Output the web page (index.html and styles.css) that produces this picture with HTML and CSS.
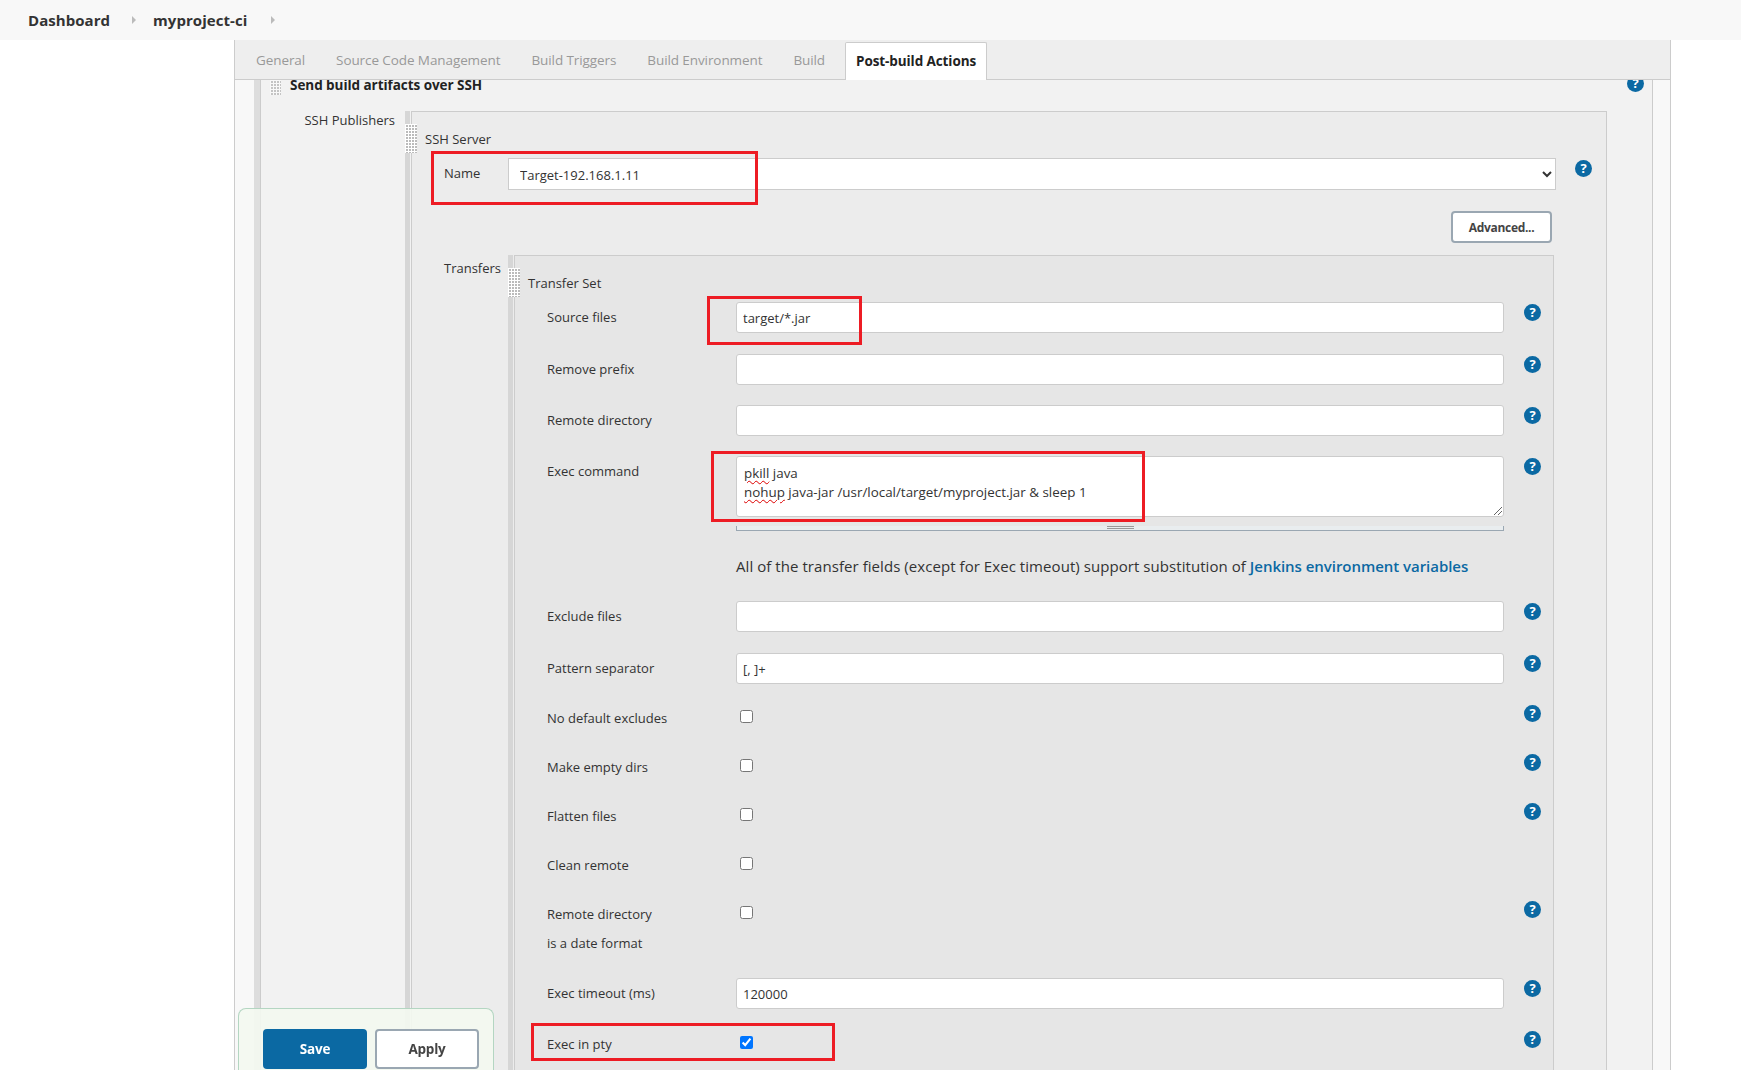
FILE: index.html
```html
<!DOCTYPE html>
<html lang="en">
<head>
<meta charset="utf-8">
<title>myproject-ci Config</title>
<link rel="stylesheet" href="styles.css">
</head>
<body>
<header class="topbar">
  <a class="crumb">Dashboard</a><span class="caret"></span>
  <a class="crumb">myproject-ci</a><span class="caret caret-end"></span>
</header>
<main class="main">
  <nav class="tabs">
    <span class="tab">General</span>
    <span class="tab">Source Code Management</span>
    <span class="tab">Build Triggers</span>
    <span class="tab">Build Environment</span>
    <span class="tab">Build</span>
    <span class="tab tab-active">Post-build Actions</span>
  </nav>
  <div class="content">
    <section class="section">
      <div class="section-head">
        <span class="grip-head"></span>
        <strong class="section-title">Send build artifacts over SSH</strong>
        <span class="help help-head">?</span>
      </div>
      <div class="nest nest-publishers">
        <div class="nest-label nest-label-pub">SSH Publishers</div>
        <div class="repeat repeat-server">
          <span class="bar"></span><span class="handle"></span>
          <div class="box box-server">
            <div class="box-title">SSH Server</div>
            <div class="name-row">
              <label class="name-label">Name</label>
              <select class="select"><option>Target-192.168.1.11</option></select>
              <span class="help help-name">?</span>
            </div>
            <div class="adv-row"><button class="btn-adv">Advanced...</button></div>
            <div class="nest nest-transfers">
              <div class="nest-label nest-label-tr">Transfers</div>
              <div class="repeat repeat-set">
                <span class="bar"></span><span class="handle"></span>
                <div class="box box-set">
                  <div class="box-title">Transfer Set</div>
                  <div class="rows">
                    <div class="row row-a"><label class="lbl">Source files</label><input class="input" value="target/*.jar"><span class="help">?</span></div>
                    <div class="row"><label class="lbl">Remove prefix</label><input class="input"><span class="help">?</span></div>
                    <div class="row"><label class="lbl">Remote directory</label><input class="input"><span class="help">?</span></div>
                    <div class="row row-text">
                      <label class="lbl">Exec command</label>
                      <div class="field-text">
                        <div class="textarea">
                          <span class="typo">pkill</span> java<br>
                          <span class="typo">nohup</span> java-jar /usr/local/target/myproject.jar &amp; sleep 1
                          <svg class="resize" width="12" height="12" viewBox="0 0 12 12"><path d="M11 3 3 11M11 7 7 11" stroke="#666" stroke-width="1" fill="none"/></svg>
                        </div>
                        <div class="drag"><span class="drag-mark"></span></div>
                      </div>
                      <span class="help">?</span>
                    </div>
                    <p class="note">All of the transfer fields (except for Exec timeout) support substitution of <a class="link">Jenkins environment variables</a></p>
                    <div class="row row-a"><label class="lbl">Exclude files</label><input class="input"><span class="help">?</span></div>
                    <div class="row"><label class="lbl">Pattern separator</label><input class="input" value="[, ]+"><span class="help">?</span></div>
                    <div class="row row-check"><label class="lbl">No default excludes</label><div class="cell"><input type="checkbox" class="check"></div><span class="help">?</span></div>
                    <div class="row row-check"><label class="lbl">Make empty dirs</label><div class="cell"><input type="checkbox" class="check"></div><span class="help">?</span></div>
                    <div class="row row-check"><label class="lbl">Flatten files</label><div class="cell"><input type="checkbox" class="check"></div><span class="help">?</span></div>
                    <div class="row row-check"><label class="lbl">Clean remote</label><div class="cell"><input type="checkbox" class="check"></div></div>
                    <div class="row row-check row-tall"><label class="lbl">Remote directory<br>is a date format</label><div class="cell"><input type="checkbox" class="check"></div><span class="help">?</span></div>
                    <div class="row row-a"><label class="lbl">Exec timeout (ms)</label><input class="input" value="120000"><span class="help">?</span></div>
                    <div class="row row-check"><label class="lbl">Exec in pty</label><div class="cell"><input type="checkbox" class="check" checked></div><span class="help">?</span></div>
                  </div>
                </div>
              </div>
            </div>
          </div>
        </div>
      </div>
    </section>
  </div>
</main>
<div class="savebar">
  <button class="btn-save">Save</button>
  <button class="btn-apply">Apply</button>
</div>
<span class="mark mark-name"></span>
<span class="mark mark-source"></span>
<span class="mark mark-exec"></span>
<span class="mark mark-pty"></span>
</body>
</html>
```

FILE: styles.css
```css
* { box-sizing: border-box; }
html, body { margin: 0; height: 1070px; overflow: hidden; background: #fff; }
body { font: 13px/20px "Open Sans", "Noto Sans", sans-serif; color: #333; }

.topbar { height: 40px; background: #f8f8f8; display: flex; align-items: center; padding-left: 28px; }
.crumb { font-weight: 700; font-size: 15px; color: #333; letter-spacing: 0.05px; }
.caret { width: 0; height: 0; border-left: 4px solid #bbb; border-top: 4px solid transparent; border-bottom: 4px solid transparent; margin: 0 17px 0 22px; }
.caret-end { margin-left: 24px; }

.main { margin-left: 234px; width: 1437px; height: 1030px; border-left: 1px solid #ccc; border-right: 1px solid #ccc; display: flex; flex-direction: column; }
.tabs { height: 40px; flex: none; background: #eee; border-bottom: 1px solid #ccc; display: flex; align-items: flex-end; gap: 9px; padding-left: 10px; position: relative; z-index: 1; font-size: 13.5px; letter-spacing: -0.09px; }
.tab { height: 37px; line-height: 36px; padding: 0 11px; color: #999; white-space: nowrap; }
.tab-active { background: #fff; color: #222; font-weight: 700; border: 1px solid #ccc; border-bottom: 0; border-radius: 2px 2px 0 0; height: 38px; margin-bottom: -1px; padding: 0 10px; }

.content { flex: 1; min-height: 0; background: #f8f8f8; padding: 0 17px 0 19px; }
.section { height: 100%; background: #f2f2f2; border-left: 6px solid #ddd; border-right: 1px solid #ccc; position: relative; }
.section::before { content: ""; position: absolute; left: 0; top: 0; bottom: 0; width: 1px; background: #ccc; }

.section-head { height: 31px; display: flex; align-items: flex-start; padding: 0 8px 0 10px; }
.grip-head { width: 11px; height: 15px; flex: none; margin-right: 9px; background: linear-gradient(90deg, #f8f8f8 1px, transparent 1px) 0 0 / 3px 3px, linear-gradient(#f8f8f8 1px, #c4c4c4 1px) 0 0 / 3px 3px; }
.section-title { line-height: 10px; color: #222; font-weight: 700; font-size: 13.5px; letter-spacing: -0.05px; }

.help { width: 17px; height: 17px; flex: none; border-radius: 50%; background: #0b69a3; color: #fff; font: 700 13px/17px "Open Sans", sans-serif; text-align: center; margin-top: 1.5px; }
.help-head { margin-left: auto; margin-top: -5px; }
.help-name { margin: 2px 0 0 19px; }

.nest { display: flex; align-items: flex-start; }
.nest-label { text-align: right; white-space: nowrap; }
.nest-label-pub { width: 135px; margin-top: -1px; margin-right: 10px; }
.nest-label-tr { width: 55px; margin: 3px 9px 0 0; text-align: left; }
.nest-publishers { padding-right: 45px; }
.nest-transfers { padding-left: 19px; padding-right: 52px; margin-top: 12px; }

.repeat { flex: 1; min-width: 0; display: flex; position: relative; }
.bar { width: 5px; flex: none; background: #d6d6d6; margin-right: 1px; }
.handle { position: absolute; left: 0; top: 13px; width: 12px; height: 29px; background: linear-gradient(90deg, #fff 1px, transparent 1px) 0 0 / 3px 3px, linear-gradient(#fff 1px, #bbb 1px) 0 0 / 3px 3px; background-color: #fff; }
.box { flex: 1; min-width: 0; border: 1px solid #ccc; border-bottom: 0; padding: 17px 0 0 13px; }
.box-server { background: #ececec; height: 959px; }
.box-set { background: #e6e6e6; height: 815px; }
.box-title { height: 20px; }

.name-row { display: flex; margin: 9px 0 0 19px; }
.name-label { width: 64px; padding-top: 5px; }
.select { width: 1048px; height: 32px; flex: none; border: 1px solid #ccc; border-radius: 0; background: #fff; padding: 2px 0 0 7px; font: 13px "Open Sans", sans-serif; color: #333; }
.adv-row { display: flex; justify-content: flex-end; padding-right: 54px; margin-top: 21px; }
.btn-adv { width: 101px; height: 32px; padding: 0; background: #fff; border: 2px solid #9aa7b2; border-radius: 4px; font: 700 12px "Open Sans", sans-serif; letter-spacing: -0.3px; color: #444; }

.rows { margin: 9px 0 0 19px; display: flex; flex-direction: column; gap: 20px; }
.row { display: flex; align-items: flex-start; min-height: 31px; }
.row-a { margin-bottom: 1px; }
.lbl { width: 189px; flex: none; padding-top: 5px; }
.input { width: 768px; height: 31px; flex: none; border: 1px solid #ccc; border-radius: 3px; background: #fff; padding: 0 6px; font: 13px "Open Sans", sans-serif; color: #333; outline: 0; }
.input + .help, .field-text + .help, .cell + .help { margin-left: 20px; }

.field-text { width: 768px; flex: none; }
.textarea { height: 61px; border: 1px solid #ccc; border-radius: 3px; background: #fff; padding: 7px 7px; font-size: 13.4px; line-height: 19px; position: relative; }
.typo { text-decoration: underline wavy #d00 1px; text-underline-offset: 2px; }
.resize { position: absolute; right: 0; bottom: 0; }
.drag { height: 5px; margin-top: 9px; background: #e9edef; border: 1px solid #9aa7b2; border-top: 0; position: relative; }
.drag-mark { position: absolute; left: 50%; top: 0; width: 27px; height: 3px; margin-left: -13px; border-top: 1px solid #999; border-bottom: 1px solid #999; }

.note { margin: 5px 0 5px 189px; font-size: 15px; line-height: 20px; letter-spacing: 0.06px; white-space: nowrap; }
.link { color: #0b69a3; font-weight: 600; letter-spacing: -0.04px; }

.row-check { min-height: 24px; height: 24px; margin-bottom: 5px; }
.row-check .lbl { padding-top: 4px; }
.row-check .help { margin-top: 1px; }
.cell { width: 768px; flex: none; }
.check { display: block; width: 13px; height: 13px; margin: 6px 0 0 4px; }
.row-tall { height: 58px; margin-bottom: 0; }
.row-tall .lbl { padding-top: 0; line-height: 29px; }

.savebar { position: fixed; left: 238px; top: 1008px; width: 256px; height: 62px; background: rgba(243, 248, 240, .92); border: 1px solid #b4d6c2; border-bottom: 0; border-radius: 8px 8px 0 0; display: flex; gap: 8px; padding: 20px 0 0 24px; }
.btn-save, .btn-apply { width: 104px; height: 40px; padding: 0; border-radius: 4px; font: 700 13.5px "Open Sans", sans-serif; letter-spacing: -0.2px; }
.btn-save { background: #0b69a3; border: 0; color: #fff; }
.btn-apply { background: #fff; border: 2px solid #9aa7b2; color: #444; }

.mark { position: fixed; border: 3px solid #ed1c24; pointer-events: none; }
.mark-name { left: 431px; top: 151px; width: 327px; height: 54px; }
.mark-source { left: 707px; top: 296px; width: 155px; height: 49px; }
.mark-exec { left: 711px; top: 451px; width: 434px; height: 71px; }
.mark-pty { left: 531px; top: 1023px; width: 304px; height: 38px; }
```
